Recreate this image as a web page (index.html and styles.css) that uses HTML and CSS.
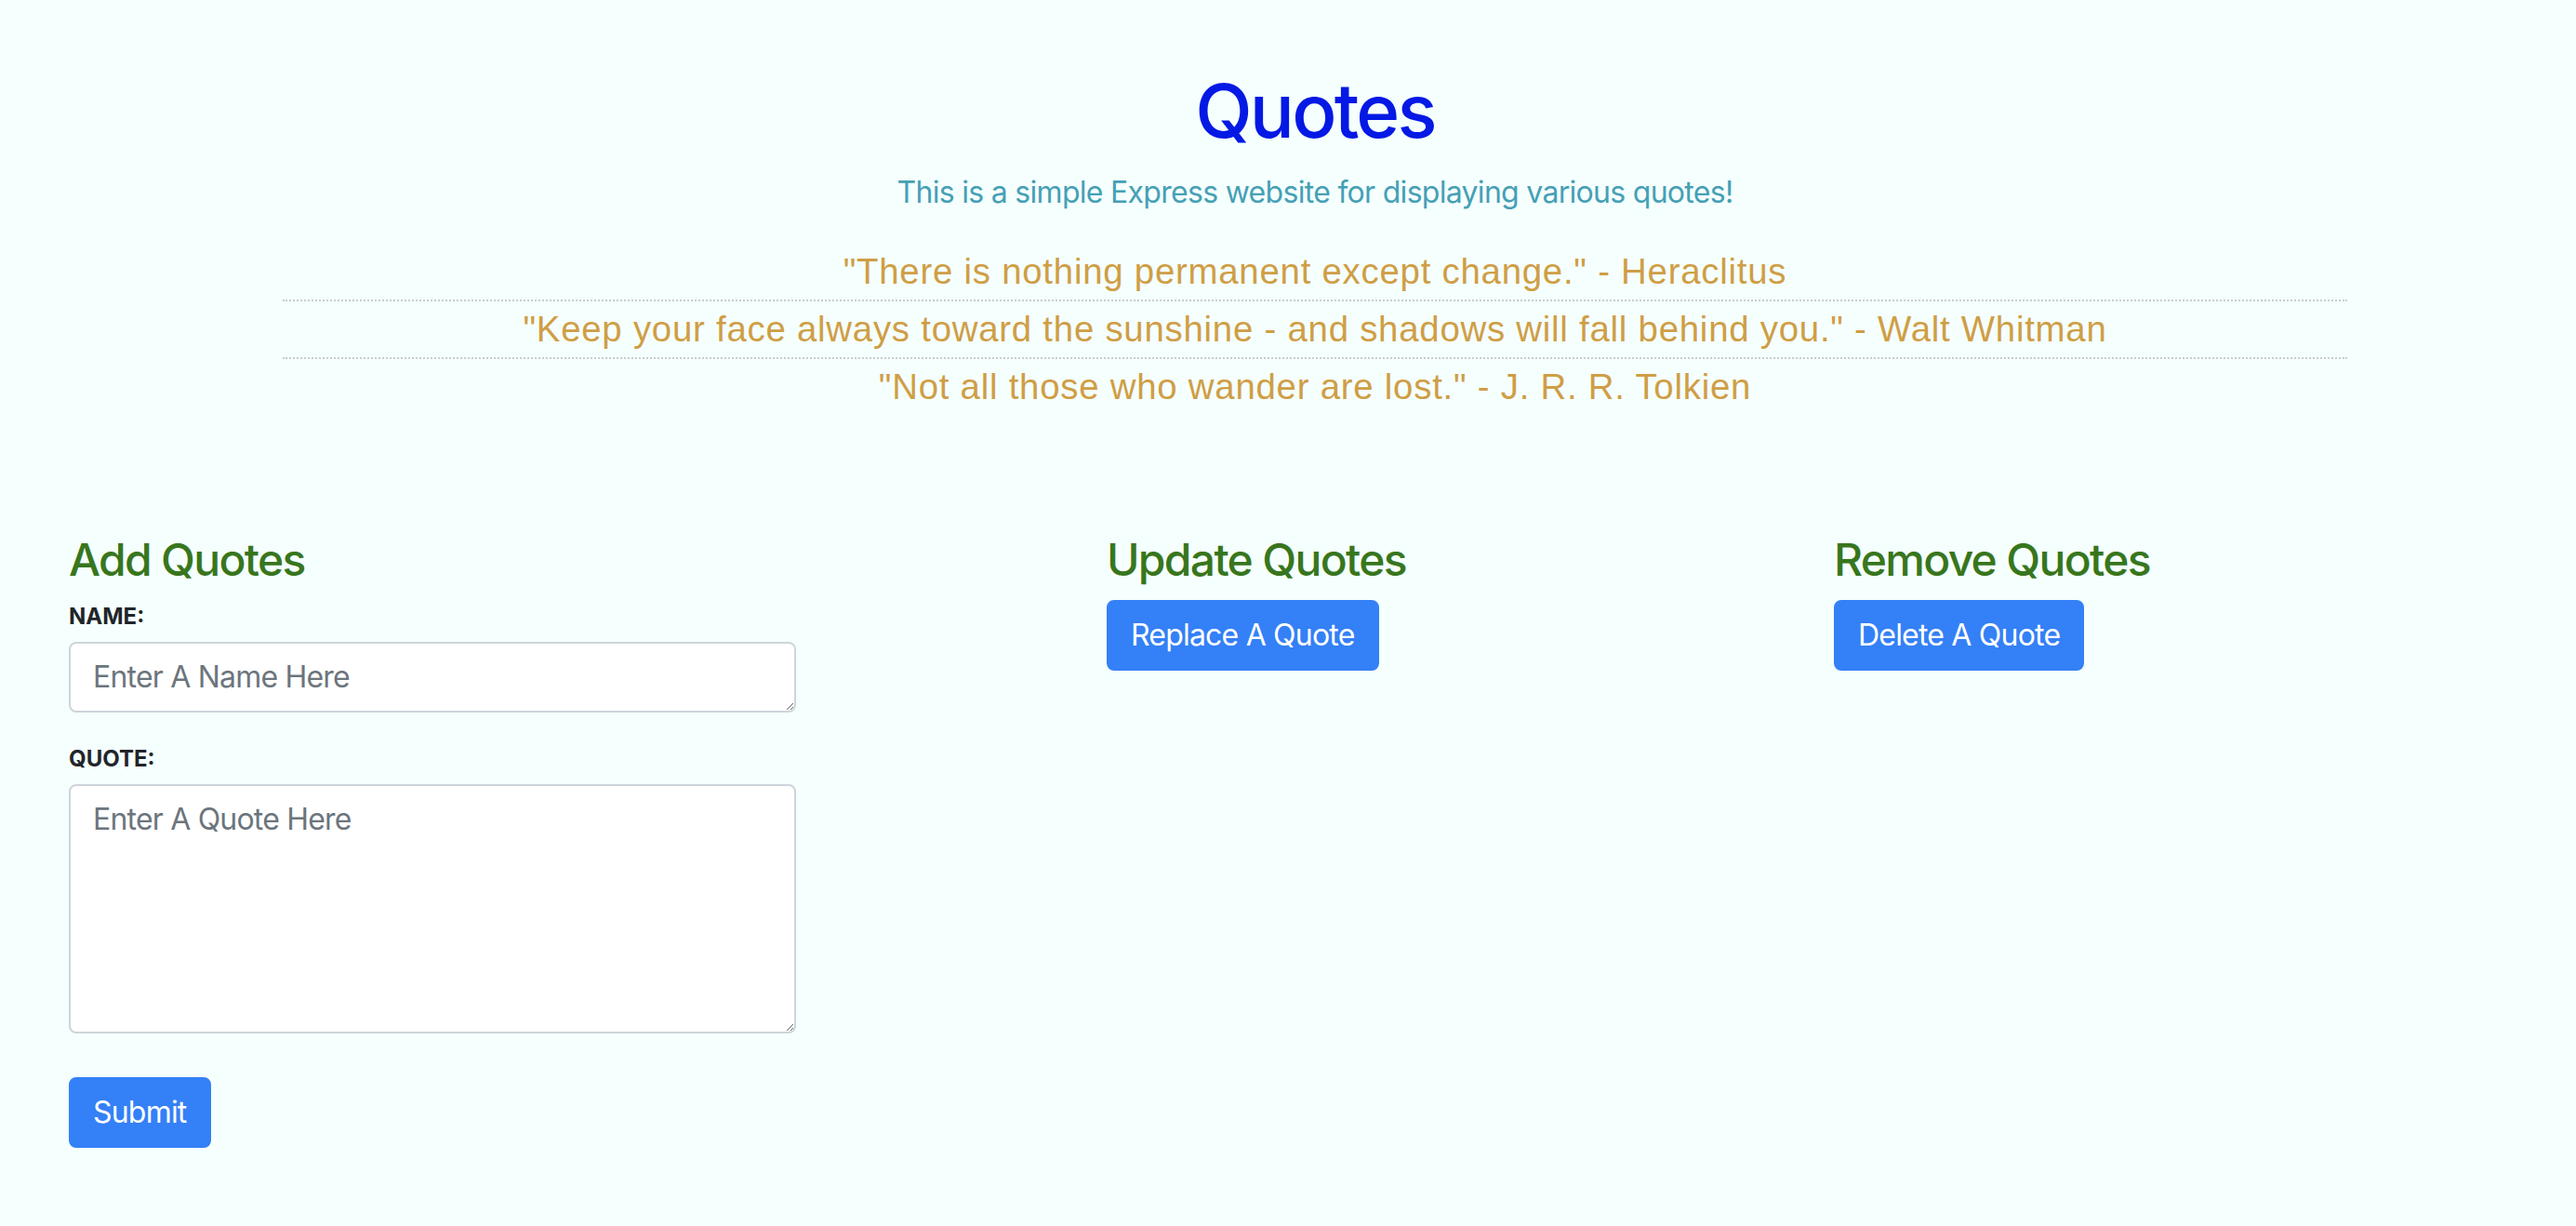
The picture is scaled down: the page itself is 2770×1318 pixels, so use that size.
FILE: index.html
```html
<!DOCTYPE html>
<html lang="en">
<head>
<meta charset="utf-8">
<title>Quotes</title>
<link rel="stylesheet" href="styles.css">
</head>
<body>
  <header class="intro">
    <h1 class="title">Quotes</h1>
    <p class="subtitle">This is a simple Express website for displaying various quotes!</p>
    <ul class="quote-list">
      <li class="quote-item">"There is nothing permanent except change." - Heraclitus</li>
      <li class="quote-item">"Keep your face always toward the sunshine - and shadows will fall behind you." - Walt Whitman</li>
      <li class="quote-item">"Not all those who wander are lost." - J. R. R. Tolkien</li>
    </ul>
  </header>

  <main class="panels">
    <section class="panel panel-add">
      <h4 class="panel-title">Add Quotes</h4>
      <form class="quote-form">
        <div class="form-group">
          <label class="field-label" for="name">NAME:</label>
          <textarea id="name" class="field field-name" rows="1" placeholder="Enter A Name Here"></textarea>
        </div>
        <div class="form-group">
          <label class="field-label" for="quote">QUOTE:</label>
          <textarea id="quote" class="field field-quote" rows="5" placeholder="Enter A Quote Here"></textarea>
        </div>
        <button type="button" class="btn btn-submit">Submit</button>
      </form>
    </section>

    <section class="panel panel-update">
      <h4 class="panel-title">Update Quotes</h4>
      <button type="button" class="btn">Replace A Quote</button>
    </section>

    <section class="panel panel-remove">
      <h4 class="panel-title">Remove Quotes</h4>
      <button type="button" class="btn">Delete A Quote</button>
    </section>
  </main>
</body>
</html>
```

FILE: styles.css
```css
html, body {
  margin: 0;
  padding: 0;
}

body {
  background: #f5fffe;
  font-family: Inter, "Liberation Sans", Arial, sans-serif;
  color: #212529;
  font-size: 32px;
  line-height: 1.5;
  letter-spacing: -0.02em;
}

.intro {
  padding: 71px 0 0 58px;
  text-align: center;
}

.title {
  margin: 0 0 16px;
  font-size: 80px;
  line-height: 96px;
  font-weight: 500;
  letter-spacing: -0.035em;
  color: #0419e4;
}

.subtitle {
  margin: 0 0 31px;
  font-size: 32px;
  line-height: 48px;
  letter-spacing: -0.022em;
  color: #45a0b5;
}

.quote-list {
  list-style: none;
  margin: 0 246px;
  padding: 0;
}

.quote-item {
  font-family: "Liberation Sans", Arial, sans-serif;
  font-size: 38.4px;
  line-height: 60px;
  letter-spacing: 0.75px;
  color: #cf9e45;
  border-bottom: 2px dotted #c9cccc;
}

.quote-item:last-child {
  border-bottom: none;
}

.panels {
  display: grid;
  grid-template-columns: 1116px 782px 1fr;
  padding: 127px 0 0 74px;
}

.panel-title {
  margin: 0 0 14px;
  font-size: 48px;
  line-height: 57.6px;
  font-weight: 500;
  letter-spacing: -0.035em;
  color: #38761d;
}

.quote-form {
  width: 782px;
}

.form-group {
  margin-bottom: 32px;
}

.field-label {
  display: block;
  margin-bottom: 9px;
  font-size: 24px;
  line-height: 36px;
  font-weight: 700;
  letter-spacing: 0;
  color: #212529;
}

.field {
  display: block;
  box-sizing: border-box;
  width: 782px;
  margin: 0;
  padding: 12px 24px;
  font-family: Inter, "Liberation Sans", Arial, sans-serif;
  font-size: 32px;
  line-height: 48px;
  letter-spacing: -0.025em;
  color: #495057;
  background: #fff;
  border: 2px solid #ced4da;
  border-radius: 8px;
  outline: none;
}

.field::placeholder {
  color: #6c757d;
}

.field-name {
  height: 76px;
}

.field-quote {
  height: 268px;
}

.btn {
  display: inline-block;
  box-sizing: border-box;
  height: 76px;
  padding: 12px 24px;
  font-family: Inter, "Liberation Sans", Arial, sans-serif;
  font-size: 32px;
  line-height: 48px;
  font-weight: 400;
  letter-spacing: -0.025em;
  color: #fff;
  background: #3480f6;
  border: 2px solid #3480f6;
  border-radius: 8px;
  cursor: pointer;
}

.btn-submit {
  margin-top: 15px;
}
```
